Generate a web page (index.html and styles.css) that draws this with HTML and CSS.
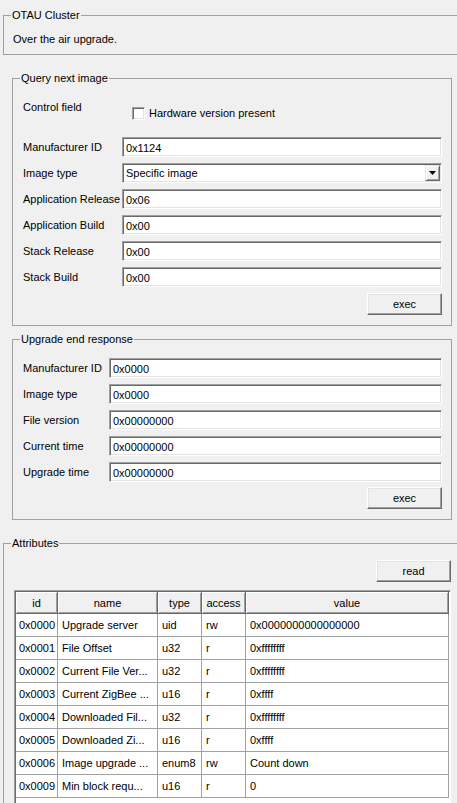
FILE: index.html
```html
<!DOCTYPE html>
<html lang="en">
<head>
<meta charset="UTF-8">
<meta name="viewport" content="width=device-width, initial-scale=1.0">
<title>OTAU Cluster</title>
<link rel="stylesheet" href="styles.css">
</head>
<body>
<div class="page">

<fieldset class="group group-wide">
    <legend>OTAU Cluster</legend>
    <div class="info-text">Over the air upgrade.</div>
</fieldset>

<fieldset class="group group-form" id="query-box">
    <legend>Query next image</legend>
    <div class="form-body">
        <div class="control-row">
            <span class="label control-label">Control field</span>
            <label class="check"><span class="check-box"></span>Hardware version present</label>
        </div>
        <div class="form-grid query-grid">
            <span class="label">Manufacturer ID</span>
            <input class="field" type="text" value="0x1124">
            <span class="label">Image type</span>
            <div class="field select">
                <span class="select-text">Specific image</span>
                <span class="select-btn">
                    <svg width="7" height="4" viewBox="0 0 7 4"><polygon points="0,0 7,0 3.5,4" fill="#000"/></svg>
                </span>
            </div>
            <span class="label">Application Release</span>
            <input class="field" type="text" value="0x06">
            <span class="label">Application Build</span>
            <input class="field" type="text" value="0x00">
            <span class="label">Stack Release</span>
            <input class="field" type="text" value="0x00">
            <span class="label">Stack Build</span>
            <input class="field" type="text" value="0x00">
        </div>
        <div class="actions">
            <button class="btn">exec</button>
        </div>
    </div>
</fieldset>

<fieldset class="group group-form" id="upgrade-box">
    <legend>Upgrade end response</legend>
    <div class="form-body">
        <div class="form-grid upgrade-grid">
            <span class="label">Manufacturer ID</span>
            <input class="field" type="text" value="0x0000">
            <span class="label">Image type</span>
            <input class="field" type="text" value="0x0000">
            <span class="label">File version</span>
            <input class="field" type="text" value="0x00000000">
            <span class="label">Current time</span>
            <input class="field" type="text" value="0x00000000">
            <span class="label">Upgrade time</span>
            <input class="field" type="text" value="0x00000000">
        </div>
        <div class="actions">
            <button class="btn">exec</button>
        </div>
    </div>
</fieldset>

<fieldset class="group group-wide group-attr">
    <legend>Attributes</legend>
    <div class="attr-body">
        <div class="attr-actions">
            <button class="btn">read</button>
        </div>
        <div class="table-view">
            <table class="attr-table">
                <thead>
                    <tr>
                        <th class="col-id">id</th>
                        <th class="col-name">name</th>
                        <th class="col-type">type</th>
                        <th class="col-access">access</th>
                        <th class="col-value">value</th>
                    </tr>
                </thead>
                <tbody>
                    <tr><td>0x0000</td><td>Upgrade server</td><td>uid</td><td>rw</td><td>0x0000000000000000</td></tr>
                    <tr><td>0x0001</td><td>File Offset</td><td>u32</td><td>r</td><td>0xffffffff</td></tr>
                    <tr><td>0x0002</td><td>Current File Ver...</td><td>u32</td><td>r</td><td>0xffffffff</td></tr>
                    <tr><td>0x0003</td><td>Current ZigBee ...</td><td>u16</td><td>r</td><td>0xffff</td></tr>
                    <tr><td>0x0004</td><td>Downloaded Fil...</td><td>u32</td><td>r</td><td>0xffffffff</td></tr>
                    <tr><td>0x0005</td><td>Downloaded Zi...</td><td>u16</td><td>r</td><td>0xffff</td></tr>
                    <tr><td>0x0006</td><td>Image upgrade ...</td><td>enum8</td><td>rw</td><td>Count down</td></tr>
                    <tr><td>0x0009</td><td>Min block requ...</td><td>u16</td><td>r</td><td>0</td></tr>
                </tbody>
            </table>
        </div>
    </div>
</fieldset>

</div>
</body>
</html>
```

FILE: styles.css
```css
body {
    font-family: "Liberation Sans", Arial, sans-serif;
    font-size: 11px;
    line-height: 13px;
    color: #000;
    background: #f0f0f0;
    margin: 0;
    padding: 0;
}

.page {
    width: 457px;
    height: 803px;
    padding-top: 9px;
    box-sizing: border-box;
    overflow: hidden;
}

/* group boxes */
.group {
    border: 1px solid #a0a0a0;
    margin: 0;
    padding: 0;
    min-width: 0;
}

.group legend {
    margin-left: 7px;
    padding: 0 1px;
    line-height: 13px;
}

.group-wide {
    margin-left: 3px;
    width: 480px;
}

.group-form {
    margin: 17px 0 0 12px;
    width: 438px;
}

#upgrade-box {
    margin-top: 7px;
}

.group-attr {
    margin-top: 17px;
}

.info-text {
    padding: 11px 0 8px 9px;
}

/* forms */
.form-body {
    padding: 15px 9px 10px 10px;
}

#upgrade-box .form-body {
    padding-top: 12px;
}

.control-row {
    display: flex;
    align-items: flex-start;
    margin-bottom: 17px;
}

.control-label {
    width: 109px;
    padding-top: 1px;
}

.check {
    display: flex;
    align-items: center;
    gap: 4px;
    margin-top: 7px;
}

.check-box {
    width: 13px;
    height: 13px;
    box-sizing: border-box;
    background: #fff;
    border: 1px solid;
    border-color: #a0a0a0 #fff #fff #a0a0a0;
    box-shadow: inset 1px 1px #696969, inset -1px -1px #e3e3e3;
}

.form-grid {
    display: grid;
    row-gap: 6px;
    align-items: center;
}

.query-grid {
    grid-template-columns: 99px 1fr;
}

.upgrade-grid {
    grid-template-columns: 86px 1fr;
}

.label {
    white-space: nowrap;
    padding-top: 1px;
}

.field {
    display: block;
    width: 100%;
    height: 20px;
    box-sizing: border-box;
    margin: 0;
    padding: 1px 3px 0 3px;
    font: inherit;
    color: #000;
    background: #fff;
    border: 1px solid;
    border-color: #a0a0a0 #fff #fff #a0a0a0;
    box-shadow: inset 1px 1px #696969, inset -1px -1px #e3e3e3;
    outline: none;
}

.select {
    display: flex;
    align-items: stretch;
    padding: 1px;
}

.select-text {
    flex: 1;
    padding: 1px 0 0 2px;
    display: flex;
    align-items: center;
}

.select-btn {
    width: 15px;
    box-sizing: border-box;
    display: flex;
    align-items: center;
    justify-content: center;
    background: #f0f0f0;
    border: 1px solid;
    border-color: #e3e3e3 #696969 #696969 #e3e3e3;
    box-shadow: inset 1px 1px #fff, inset -1px -1px #a0a0a0;
}

.actions {
    display: flex;
    justify-content: flex-end;
    margin-top: 6px;
}

#upgrade-box .actions {
    margin-top: 5px;
}

.btn {
    width: 75px;
    height: 22px;
    padding: 0;
    font: inherit;
    color: #000;
    background: #f0f0f0;
    border: 1px solid;
    border-color: #fff #696969 #696969 #fff;
    box-shadow: inset -1px -1px #a0a0a0, inset 1px 1px #e3e3e3;
    cursor: pointer;
}

/* attributes */
.attr-body {
    width: 437px;
    padding: 10px 0 0 10px;
}

.attr-actions {
    display: flex;
    justify-content: flex-end;
    margin-bottom: 8px;
}

.table-view {
    height: 300px;
    padding: 1px;
    background: #fff;
    border: 1px solid;
    border-color: #a0a0a0 #fff #fff #a0a0a0;
    box-shadow: inset 1px 1px #696969;
    overflow: hidden;
}

.attr-table {
    width: 433px;
    table-layout: fixed;
    border-collapse: separate;
    border-spacing: 0;
}

.attr-table th,
.attr-table td {
    box-sizing: border-box;
    padding: 1px 3px 0 3px;
    white-space: nowrap;
    overflow: hidden;
    font-weight: normal;
}

.attr-table th {
    height: 22px;
    text-align: center;
    background: #f0f0f0;
    border-right: 1px solid #696969;
    border-bottom: 1px solid #696969;
    box-shadow: inset 1px 1px #fff, inset -1px -1px #a0a0a0;
}

.attr-table td {
    height: 23px;
    text-align: left;
    border-right: 1px solid #a0a0a0;
    border-bottom: 1px solid #a0a0a0;
}

.attr-table td:nth-child(n+2) {
    padding-left: 4px;
}

.col-id { width: 42px; }
.col-name { width: 100px; }
.col-type { width: 44px; }
.col-access { width: 44px; }
.col-value { width: 203px; }
```
